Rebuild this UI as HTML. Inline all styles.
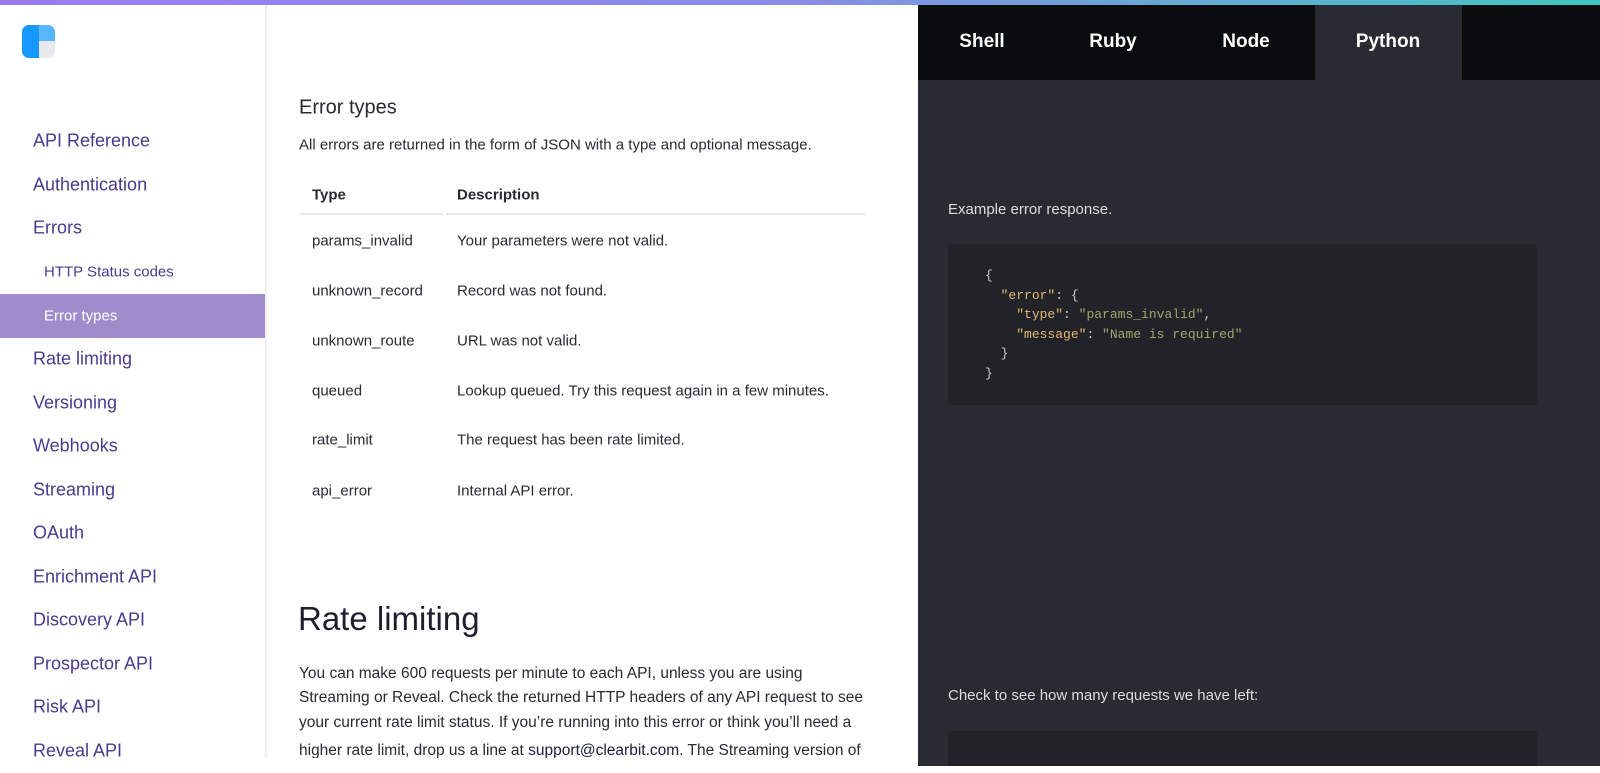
<!DOCTYPE html>
<html><head><meta charset="utf-8"><style>
*{margin:0;padding:0;box-sizing:border-box}
body{width:1600px;height:773px;overflow:hidden;background:#fff;font-family:"Liberation Sans",sans-serif;position:relative}
.bar{position:absolute;left:0;top:0;width:1600px;height:5px;background:linear-gradient(90deg,#9a7cf0,#8a8ee6 50%,#3ec6c0)}
.side{position:absolute;left:0;top:5px;width:267px;height:753px;border-right:2px solid #f1f1f3;overflow:hidden}
.logo{position:absolute;left:22px;top:20px;width:33px;height:33px;border-radius:7px;overflow:hidden}
.nav{position:absolute;left:33px;font-size:18px;color:#463c8f;transform:translateY(-50%);white-space:nowrap}
.sub{left:44px;font-size:15px}
.act{position:absolute;left:0;top:289px;width:267px;height:44px;background:#a08ccb}
.t{position:absolute;color:#2a2a33;white-space:nowrap;transform:translateY(-50%)}
.dark{position:absolute;left:918px;top:5px;width:682px;height:761px;background:#292b33;overflow:hidden}
.tabs{position:absolute;left:0;top:0;width:682px;height:75px;background:#0b0c0e}
.tab{position:absolute;top:37px;transform:translate(-50%,-50%);color:#fff;font-weight:bold;font-size:19px}
.code{position:absolute;left:30px;width:589px;background:#212328;border-radius:3px}
pre{font-family:"Liberation Mono",monospace;font-size:13px;line-height:19.5px;color:#ccc;position:absolute;left:37px;top:22px}
.k{color:#e6b673}.s{color:#98a96b}
</style></head><body>
<div class="bar"></div>
<div class="side">
<div class="logo"><div style="position:absolute;left:0;top:0;width:17px;height:33px;background:#1798ff"></div><div style="position:absolute;left:17px;top:0;width:16px;height:16px;background:#58b6ff"></div><div style="position:absolute;left:17px;top:16px;width:16px;height:17px;background:#e8e9ed"></div></div>
<div class="act"></div>
<div class="nav" style="top:136px">API Reference</div>
<div class="nav" style="top:180px">Authentication</div>
<div class="nav" style="top:223px">Errors</div>
<div class="nav sub" style="top:267px">HTTP Status codes</div>
<div class="nav sub" style="top:311px;color:#fff">Error types</div>
<div class="nav" style="top:354px">Rate limiting</div>
<div class="nav" style="top:398px">Versioning</div>
<div class="nav" style="top:441px">Webhooks</div>
<div class="nav" style="top:485px">Streaming</div>
<div class="nav" style="top:528px">OAuth</div>
<div class="nav" style="top:572px">Enrichment API</div>
<div class="nav" style="top:615px">Discovery API</div>
<div class="nav" style="top:659px">Prospector API</div>
<div class="nav" style="top:702px">Risk API</div>
<div class="nav" style="top:746px">Reveal API</div>
</div>
<div class="t" style="left:299px;top:108px;font-size:20px">Error types</div>
<div class="t" style="left:299px;top:145px;font-size:15px">All errors are returned in the form of JSON with a type and optional message.</div>
<div class="t" style="left:312px;top:195px;font-size:15px;font-weight:bold">Type</div>
<div class="t" style="left:457px;top:195px;font-size:15px;font-weight:bold">Description</div>
<div style="position:absolute;left:300px;top:213px;width:143px;height:2px;background:#e8e8ea"></div>
<div style="position:absolute;left:446px;top:213px;width:419px;height:2px;background:#e8e8ea"></div>
<div class="t" style="left:312px;top:241px;font-size:15px">params_invalid</div><div class="t" style="left:457px;top:241px;font-size:15px">Your parameters were not valid.</div>
<div class="t" style="left:312px;top:291px;font-size:15px">unknown_record</div><div class="t" style="left:457px;top:291px;font-size:15px">Record was not found.</div>
<div class="t" style="left:312px;top:341px;font-size:15px">unknown_route</div><div class="t" style="left:457px;top:341px;font-size:15px">URL was not valid.</div>
<div class="t" style="left:312px;top:391px;font-size:15px">queued</div><div class="t" style="left:457px;top:391px;font-size:15px">Lookup queued. Try this request again in a few minutes.</div>
<div class="t" style="left:312px;top:440px;font-size:15px">rate_limit</div><div class="t" style="left:457px;top:440px;font-size:15px">The request has been rate limited.</div>
<div class="t" style="left:312px;top:491px;font-size:15px">api_error</div><div class="t" style="left:457px;top:491px;font-size:15px">Internal API error.</div>
<div class="t" style="left:298px;top:619px;font-size:33px;color:#1e1e2e">Rate limiting</div>
<div class="t" style="left:299px;top:674px;font-size:15.5px">You can make 600 requests per minute to each API, unless you are using</div>
<div class="t" style="left:299px;top:698px;font-size:15.5px">Streaming or Reveal. Check the returned HTTP headers of any API request to see</div>
<div class="t" style="left:299px;top:723px;font-size:15.5px">your current rate limit status. If you’re running into this error or think you’ll need a</div>
<div style="position:absolute;left:0;top:740px;width:918px;height:18px;overflow:hidden"><div class="t" style="left:299px;font-size:15.5px;transform:none;top:2px">higher rate limit, drop us a line at <span style="color:#1e1e40">support@clearbit.com</span>. The Streaming version of</div></div>
<div class="dark">
<div class="tabs">
<div style="position:absolute;left:397px;top:0;width:147px;height:75px;background:#292b33"></div>
<div class="tab" style="left:64px">Shell</div>
<div class="tab" style="left:195px">Ruby</div>
<div class="tab" style="left:328px">Node</div>
<div class="tab" style="left:470px">Python</div>
</div>
<div style="position:absolute;left:30px;top:196px;color:#ddd;font-size:15px">Example error response.</div>
<div class="code" style="top:239px;height:161px"><pre>{
  <span class="k">"error"</span>: {
    <span class="k">"type"</span>: <span class="s">"params_invalid"</span>,
    <span class="k">"message"</span>: <span class="s">"Name is required"</span>
  }
}</pre></div>
<div style="position:absolute;left:30px;top:682px;color:#ddd;font-size:15px">Check to see how many requests we have left:</div>
<div class="code" style="top:726px;height:60px"></div>
</div>
</body></html>
